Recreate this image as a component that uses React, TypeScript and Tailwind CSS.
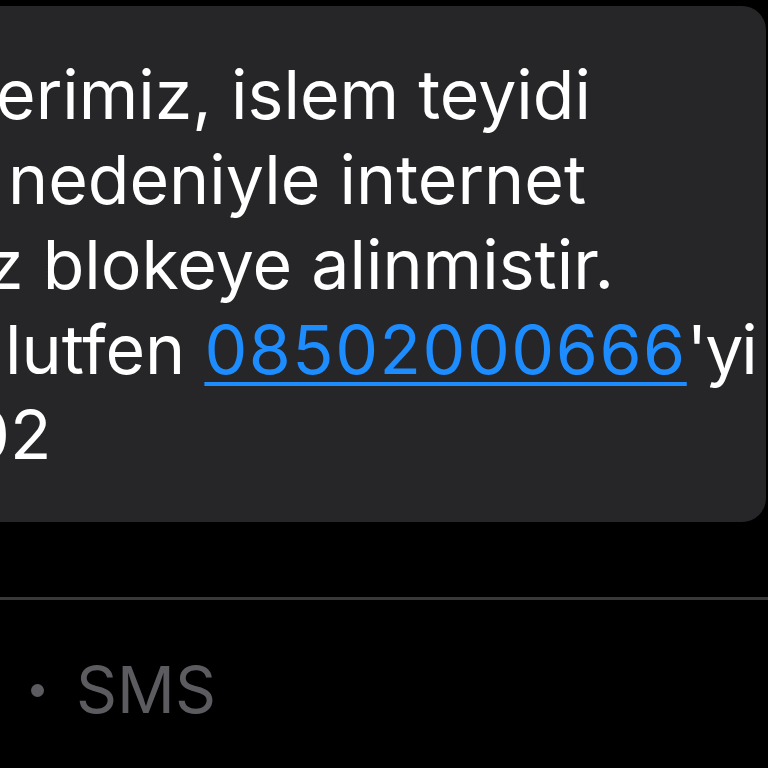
import React from "react";

const font = { fontFamily: "Inter, 'Liberation Sans', sans-serif" };

export default function App() {
  return (
    <div className="w-[768px] h-[768px] bg-black overflow-hidden" style={font}>
      <div className="pt-[6px]">
        <div className="ml-[-100px] w-[866px] h-[516px] bg-[#262629] rounded-r-[24px] pt-[46px] pl-[100px] text-white text-[68px] leading-[85px]">
          <div className="whitespace-nowrap ml-[-4px]">erimiz, islem teyidi</div>
          <div className="whitespace-nowrap ml-[8px]">nedeniyle internet</div>
          <div className="whitespace-nowrap ml-[-14px]">z blokeye alinmistir.</div>
          <div className="whitespace-nowrap ml-[5px]">
            lutfen{" "}
            <span className="text-[#1d8cff] underline decoration-[4px] underline-offset-[8px] tracking-[1.5px]">08502000666</span>
            <span className="tracking-[-2px]">'yi</span>
          </div>
          <div className="whitespace-nowrap ml-[-33px]">02</div>
        </div>
      </div>
      <div className="mt-[75px] h-[3px] bg-[#38383a]" />
      <div className="flex items-center h-[180px] text-[#5c5c60] text-[64px]">
        <span className="ml-[31px] w-[13px] h-[13px] rounded-full bg-[#5c5c60]" />
        <span className="ml-[32px]">SMS</span>
      </div>
    </div>
  );
}
